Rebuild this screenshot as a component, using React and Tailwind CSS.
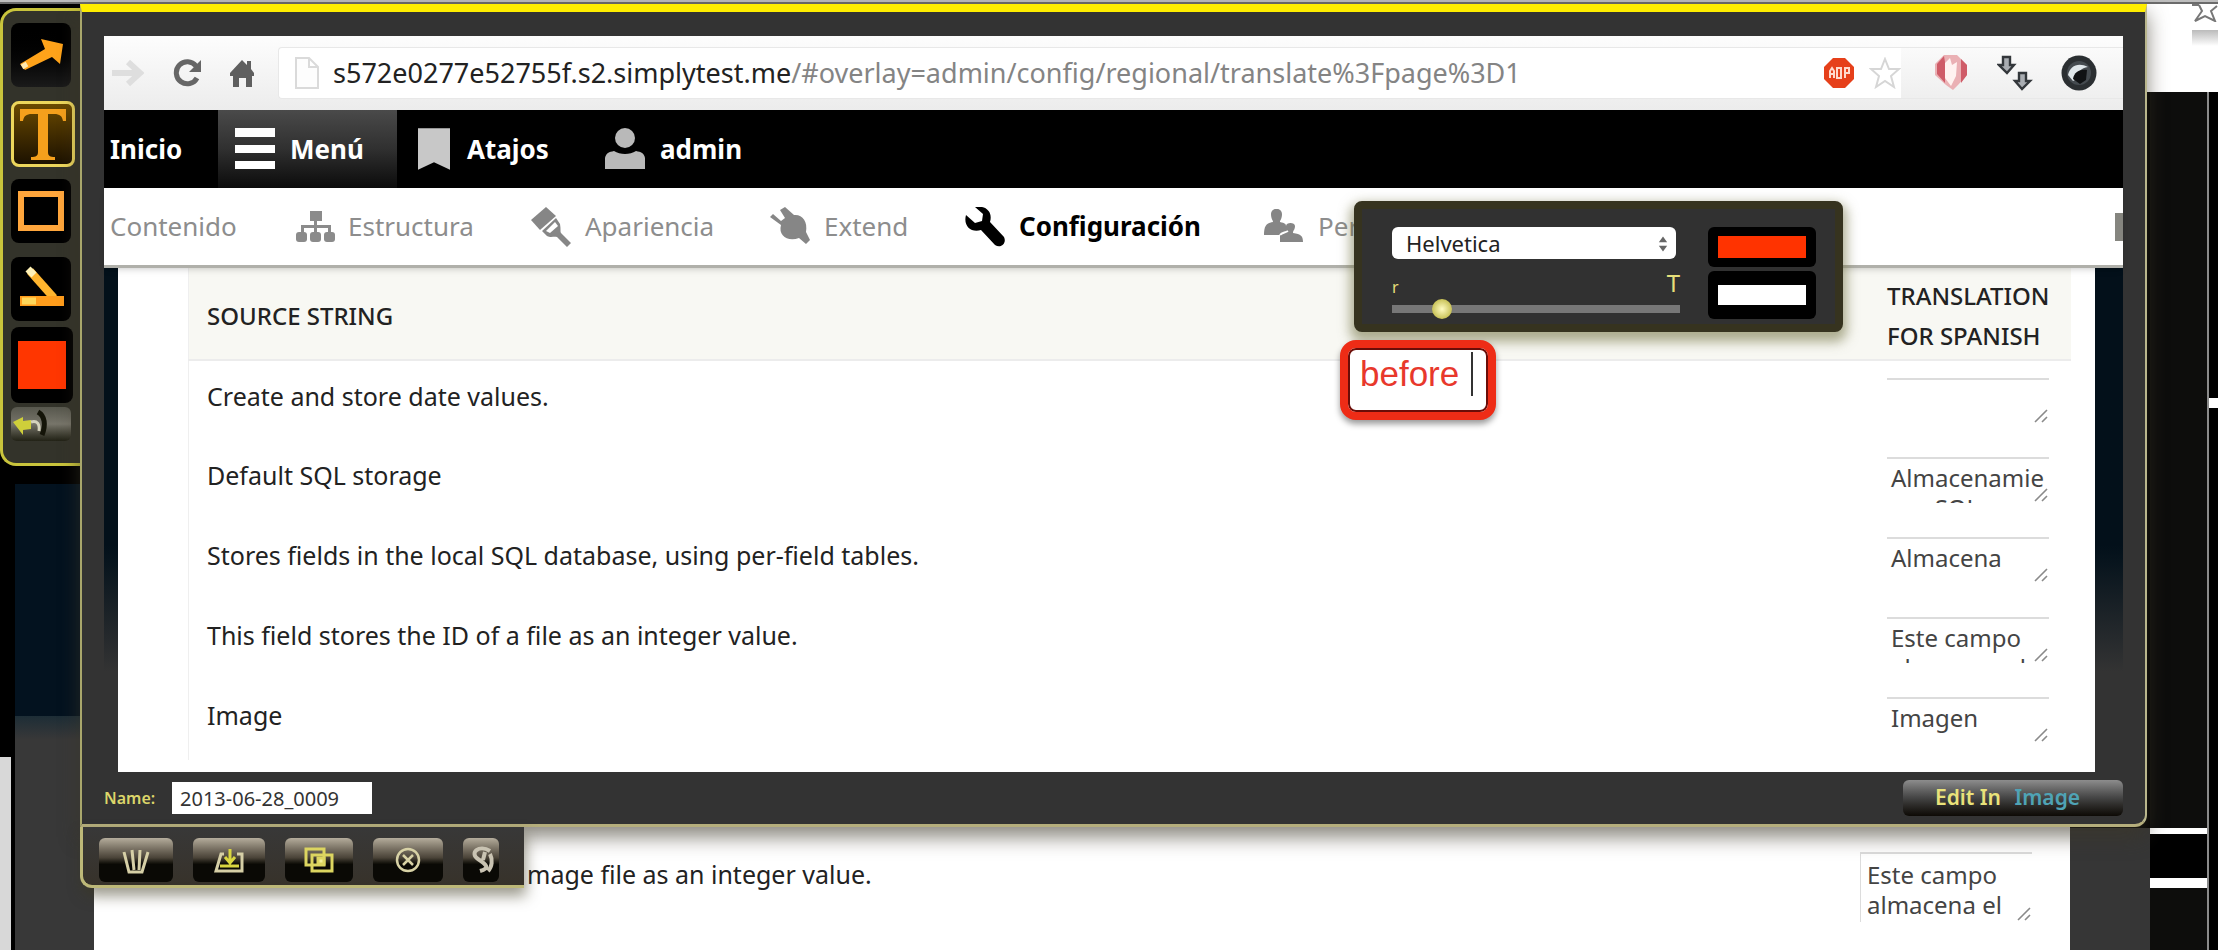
import React from "react";

const rows = [
  { source: "Create and store date values.", target: "" },
  { source: "Default SQL storage", target: "Almacenamie\n       SQL" },
  { source: "Stores fields in the local SQL database, using per-field tables.", target: "Almacena" },
  { source: "This field stores the ID of a file as an integer value.", target: "Este campo\nalmacena el" },
  { source: "Image", target: "Imagen" },
];

function Grip() {
  return (
    <svg className="pointer-events-none absolute right-0 bottom-0 h-4 w-4" viewBox="0 0 16 16" stroke="#8a8a8a" strokeWidth="1.6" fill="none">
      <path d="M2 14 14 2M9 14l5-5" />
    </svg>
  );
}

function Backdrop() {
  return (
    <div className="absolute inset-0 flex flex-col bg-black" aria-hidden="true">
      <div className="h-1 border-b-2 border-[#6b6b6b] bg-[#bdbdbd]" />
      <div className="flex h-[88px] justify-end">
        <div className="flex w-[71px] flex-col items-end bg-white">
          <svg className="h-[18px] w-[26px]" viewBox="0 0 26 18" fill="none" stroke="#777" strokeWidth="2">
            <path d="M0 1h7M7 1 10 7l-7 10 10-5 10 5-4-10 6-5" />
          </svg>
          <div className="mt-2 h-4 w-[26px] bg-linear-to-b from-[#bbb] to-white" />
        </div>
      </div>
      <div className="flex flex-1">
        <div className="flex w-[15px] flex-col">
          <div className="h-[665px]" />
          <div className="mr-1 flex-1 bg-[#d8d8d8]" />
        </div>
        <div className="flex w-[79px] flex-col">
          <div className="h-[392px]" />
          <div className="h-[232px] bg-[#03121f]" />
          <div className="flex-1 bg-linear-to-b from-[#1d2d36] to-[#383838] to-10%" />
        </div>
        <div className="flex-1 self-end bg-white">
          <div className="h-[130px]" />
        </div>
        <div className="flex w-20 flex-col">
          <div className="h-[736px]" />
          <div className="flex-1 bg-[#363636]" />
        </div>
        <div className="flex w-[57px] flex-col bg-[#0d0d0c]">
          <div className="h-[736px]" />
          <div className="h-1.5 bg-white" />
          <div className="h-11 bg-black" />
          <div className="h-2.5 bg-white" />
        </div>
        <div className="flex w-[11px] flex-col border-l-2 border-[#8a8a8a]">
          <div className="h-[306px]" />
          <div className="h-2.5 bg-white" />
        </div>
      </div>
    </div>
  );
}

function ToolBar() {
  return (
    <div className="mt-1 flex h-[458px] w-20 shrink-0 flex-col rounded-l-2xl border-3 border-r-0 border-[#c9c43c] bg-[#33332a] pt-3 pl-2">
      <button aria-label="Arrow" className="flex h-16 w-[60px] items-center justify-center rounded-lg bg-linear-to-b from-black to-[#1a1a1a]">
        <svg className="h-11 w-12" viewBox="0 0 48 44">
          <path d="M3 31 28 16l-4-10 22 5-3 20-8-7L8 37Z" fill="#ffa31a" />
          <path d="m5 34 5-3" stroke="#ffe9b0" strokeWidth="5" />
        </svg>
      </button>
      <button aria-label="Text" className="mt-3.5 flex h-[66px] w-16 items-center justify-center rounded-lg border-3 border-[#ecd65c] bg-linear-to-b from-[#6b4a00] to-[#1d1200]">
        <svg className="h-14 w-12" viewBox="0 0 48 56" fill="#f5a01c">
          <path d="M1 3h46v12h-3c-1-5-3-7-9-7h-6v38c0 4 2 5 7 5v3H12v-3c5 0 7-1 7-5V8h-6c-6 0-8 2-9 7H1Z" />
        </svg>
      </button>
      <button aria-label="Rectangle" className="mt-3 flex h-16 w-[60px] items-center justify-center rounded-lg bg-black">
        <span className="h-10 w-[46px] border-6 border-[#ffa63c]" />
      </button>
      <button aria-label="Pen" className="mt-3.5 flex h-16 w-[60px] items-center justify-center rounded-lg bg-black">
        <svg className="h-12 w-12" viewBox="0 0 48 48" fill="none">
          <path d="m13 6 24 27" stroke="#ffb52e" strokeWidth="8" />
          <path d="m11 4 6 6" stroke="#fff2b8" strokeWidth="7" />
          <path d="M3 36h44" stroke="#ff9d1c" strokeWidth="10" />
          <path d="M5 36h14" stroke="#ffd75a" strokeWidth="7" />
        </svg>
      </button>
      <button aria-label="Color" className="mt-1.5 flex h-[76px] w-[62px] items-center justify-center rounded-lg bg-black">
        <span className="size-12 bg-[#ff3600]" />
      </button>
      <button aria-label="Undo" className="mt-1 flex h-[34px] w-[60px] items-center rounded-md bg-linear-to-b from-[#57574d] via-[#77756a] to-[#222216]">
        <svg className="h-8 w-14" viewBox="0 0 56 32" fill="none">
          <path d="M31 27c4-10 3-19-4-23" stroke="#141408" strokeWidth="5" />
          <path d="m2 14 10-5v4l8-1v9l-8 1v5Z" fill="#cfcf3a" />
          <path d="M20 14c6-2 9 2 8 9" stroke="#d5d3bd" strokeWidth="3" />
        </svg>
      </button>
    </div>
  );
}

function BrowserBar() {
  return (
    <div className="flex h-[74px] items-center bg-linear-to-b from-[#fdfdfd] to-[#ececec] pl-2">
      <button aria-label="Forward" className="w-8">
        <svg className="h-7 w-8" viewBox="0 0 32 28" fill="none" stroke="#dedede" strokeWidth="6">
          <path d="M0 14h24M16 3l12 11-12 11" />
        </svg>
      </button>
      <button aria-label="Reload" className="ml-7">
        <svg className="h-7 w-[30px]" viewBox="0 0 30 28" fill="none">
          <path d="M24 7A11 11 0 1 0 25 19" stroke="#666" strokeWidth="5" />
          <path d="M29 1v12H17Z" fill="#666" />
        </svg>
      </button>
      <button aria-label="Home" className="ml-7">
        <svg className="h-7 w-6" viewBox="0 0 24 28" fill="#5f5f5f">
          <path d="m12 1 5 5V2h4v8l3 4v3h-2v11h-6v-9H9v9H3V17H0v-3Z" />
        </svg>
      </button>
      <div className="ml-6 flex h-[52px] flex-1 items-center rounded-l border-y border-l border-[#e8e8e8] bg-white pl-4">
        <svg className="h-8 w-6" viewBox="0 0 24 32" fill="#fdfdfd" stroke="#dadada" strokeWidth="2">
          <path d="M1 1h13l9 9v21H1ZM14 1v9h9" />
        </svg>
        <p className="ml-3.5 flex-1 text-[27px] leading-8 whitespace-nowrap text-[#848484]">
          <span className="text-[#222]">s572e0277e52755f.s2.simplytest.me</span>/#overlay=admin/config/regional/translate%3Fpage%3D1
        </p>
        <svg className="mr-3.5 size-8" viewBox="0 0 32 32">
          <path d="M10 1h12l9 9v12l-9 9H10l-9-9V10Z" fill="#e6401a" />
          <path d="M7 21v-7l2-3 2 3v7M7 17h4M14 11v10h4v-10ZM22 21V11h4v5h-4" stroke="#ffd9cc" strokeWidth="2" fill="none" />
        </svg>
        <svg className="size-8" viewBox="0 0 32 32" fill="#fff" stroke="#d6d6d6" strokeWidth="2">
          <path d="m16 2 4 10h10l-8 7 3 11-9-6-9 6 3-11-8-7h10Z" />
        </svg>
      </div>
      <div className="flex h-[52px] items-center gap-7 border-y border-[#e8e8e8] pr-[26px] pl-8">
        <svg className="h-10 w-9" viewBox="0 0 36 40">
          <path d="M11 2h13l10 10v10l-9 10-5 5-7-5L2 22V11Z" fill="#eab0b4" />
          <path d="M11 3 4 11v10l8 9V9ZM28 30l6-8V12l-6-6Z" fill="#cf5c68" />
          <path d="m12 10 5-5 2 7 5-3-1 14-5 10-6-8Z" fill="#fff2f0" />
        </svg>
        <svg className="h-9 w-9" viewBox="0 0 36 36" fill="#a9adb2" stroke="#33373b" strokeWidth="2.4">
          <path d="M6 2h7v8h4l-7 8-8-8h4ZM22 18h7v8h4l-8 8-7-8h4Z" />
        </svg>
        <svg className="size-9" viewBox="0 0 36 36">
          <circle cx="18" cy="18" r="17.5" fill="#2b2f32" />
          <circle cx="18" cy="18" r="12" fill="#454b50" />
          <path d="M7 20c2-9 10-13 20-8-7 1-10 4-11 12l-4 2Z" fill="#dfe6ea" />
          <path d="M12 24c1-7 7-10 14-9l-1 10-6 4Z" fill="#101214" />
        </svg>
      </div>
    </div>
  );
}

function AdminNav() {
  return (
    <nav className="flex h-[78px] items-center bg-black text-[26px] font-bold text-white">
      <a href="#inicio" className="w-[114px] pl-1.5">Inicio</a>
      <a href="#menu" className="flex h-full w-[179px] items-center bg-linear-to-b from-[#4a4a4a] via-[#303030] to-[#0c0c0c] pl-4">
        <svg className="h-[42px] w-[42px]" viewBox="0 0 42 42" fill="#fff">
          <path d="M1 0h40v9H1ZM1 17h40v8H1ZM1 33h40v8H1Z" />
        </svg>
        <span className="ml-3.5">Menú</span>
      </a>
      <a href="#atajos" className="flex w-[187px] items-center pl-[21px]">
        <svg className="h-11 w-8" viewBox="0 0 34 44" fill="#c8c8c8">
          <path d="M0 0h34v44L17 36 0 44Z" />
        </svg>
        <span className="ml-[17px]">Atajos</span>
      </a>
      <a href="#admin" className="flex items-center pl-5">
        <svg className="h-[42px] w-[42px]" viewBox="0 0 42 42" fill="#b9b9b9">
          <ellipse cx="21" cy="10" rx="10" ry="10" />
          <path d="M1 41V30c1-5 4-6 9-7 6 4 16 4 22 0 5 1 8 2 9 7v11Z" />
        </svg>
        <span className="ml-3.5">admin</span>
      </a>
    </nav>
  );
}

function SectionTabs() {
  return (
    <nav className="relative z-10 flex h-[80px] items-center overflow-hidden border-b-3 border-[#b0b0aa] bg-white text-[26px] whitespace-nowrap text-[#8d8d8d] shadow-md">
      <a href="#contenido" className="w-[192px] shrink-0 pl-1.5">Contenido</a>
      <a href="#estructura" className="flex w-[235px] shrink-0 items-center">
        <svg className="h-8 w-10" viewBox="0 0 40 32" fill="#8b8b8b">
          <path d="M14 0h12v10h-5v4h14v7h-3v-4H21v4h-3v-4H8v4H5v-7h13v-4h-4Z" />
          <rect x="0" y="21" width="11" height="10" rx="3" />
          <rect x="14" y="21" width="11" height="10" rx="3" />
          <rect x="28" y="21" width="11" height="10" rx="3" />
        </svg>
        <span className="ml-3">Estructura</span>
      </a>
      <a href="#apariencia" className="flex w-[239px] shrink-0 items-center">
        <svg className="h-10 w-10" viewBox="0 0 40 40" fill="#868686">
          <path d="M15 0 0 13l9 10L25 9Z" />
          <path d="m11 24 14-13 4 6c1 5 0 8 1 9l10 10-4 4-10-10c-3-1-6 1-10-1Z" />
          <path d="m15 24 9-9 3 4-8 7Z" fill="#fff" />
        </svg>
        <span className="ml-3.5">Apariencia</span>
      </a>
      <a href="#extend" className="flex w-[195px] shrink-0 items-center">
        <svg className="h-10 w-10" viewBox="0 0 40 40" fill="#868686">
          <path d="m0 10 3-3 8 7 4-3-5-8 5-3 9 8c8-1 14 6 12 17l4 8-4 4-7-6c-11 4-21-2-18-13Z" />
        </svg>
        <span className="ml-3.5">Extend</span>
      </a>
      <a href="#configuracion" className="flex w-[299px] shrink-0 items-center font-bold text-black">
        <svg className="h-10 w-10" viewBox="0 0 40 40" fill="#000">
          <path d="M10 0c11-2 18 5 15 15l14 15c3 6-3 12-9 8L16 23C6 26-2 19 1 8l9 8 7-2 1-7Z" />
        </svg>
        <span className="ml-3.5">Configuración</span>
      </a>
      <a href="#personas" className="flex shrink-0 items-center">
        <svg className="h-9 w-10" viewBox="0 0 40 36" fill="#868686">
          <path d="M7 5c0-7 11-7 11 0 0 5-2 6-2 8 5 1 6 2 6 4 0-4 9-4 9 0 0 4-2 4-2 7 8 1 10 3 10 9H16v-7H0c0-9 2-12 9-13 0-2-2-3-2-8Z" />
          <path d="M16 26c2-3 5-2 8-4" stroke="#fff" strokeWidth="2" fill="none" />
        </svg>
        <span className="ml-3.5">Personas</span>
      </a>
      <span className="ml-auto h-7 w-2 shrink-0 bg-[#85857f]" />
    </nav>
  );
}

function StringsTable() {
  return (
    <div className="flex h-[504px] bg-linear-to-b from-[#03101a] from-55% to-[#333333] to-80% pr-7 pl-3.5">
      <div className="flex-1 overflow-hidden bg-white pr-6 pl-[70px]">
        <table className="w-full table-fixed border-collapse border-l border-[#efefef] text-[25px] text-[#222]">
          <thead>
            <tr className="h-[92px] border-b-2 border-[#ececec] bg-[#f8f8f3] text-left text-2xl">
              <th className="pt-1 pl-[18px] font-medium">SOURCE STRING</th>
              <th className="w-[188px] pt-1 pl-1 leading-10 font-medium">TRANSLATION FOR SPANISH</th>
            </tr>
          </thead>
          <tbody>
            {rows.map((r) => (
              <tr key={r.source} className="h-20">
                <td className="pb-2 pl-[18px]">{r.source}</td>
                <td className="pl-1 align-middle">
                  <div className="relative h-[46px] w-[162px]">
                    <textarea
                      aria-label={"Translation of: " + r.source}
                      defaultValue={r.target}
                      className="block h-[46px] w-full resize-none overflow-hidden border-t-2 border-[#dcdcdc] pt-1 pl-1 text-2xl leading-[30px] whitespace-pre text-[#444]"
                    />
                    <Grip />
                  </div>
                </td>
              </tr>
            ))}
          </tbody>
        </table>
      </div>
    </div>
  );
}

function TextOptions() {
  return (
    <div className="absolute top-[201px] left-[1354px] z-20 flex h-[131px] w-[489px] rounded-lg border-8 border-[#36331f] bg-[#313131] pt-[18px] pl-[30px] shadow-[0_6px_12px_4px_rgba(110,110,60,0.55)]">
      <div className="w-[288px]">
        <div className="relative">
          <select aria-label="Font" className="h-8 w-[284px] appearance-none rounded-md bg-white pl-3.5 text-[22px] leading-8 text-[#222]">
            <option>Helvetica</option>
          </select>
          <svg className="pointer-events-none absolute top-2 right-3 h-[18px] w-2.5" viewBox="0 0 12 18" fill="#666">
            <path d="m6 0 5 7H1ZM6 18l5-7H1Z" />
          </svg>
        </div>
        <div className="mt-4 flex h-6 items-end justify-between leading-6 text-[#e6df7a]">
          <span className="text-base">r</span>
          <span className="text-2xl">T</span>
        </div>
        <input
          type="range"
          aria-label="Text size"
          defaultValue="15"
          className="block h-5 w-full appearance-none bg-transparent [&::-webkit-slider-runnable-track]:h-2 [&::-webkit-slider-runnable-track]:bg-[#777] [&::-webkit-slider-thumb]:-mt-1.5 [&::-webkit-slider-thumb]:size-5 [&::-webkit-slider-thumb]:appearance-none [&::-webkit-slider-thumb]:rounded-full [&::-webkit-slider-thumb]:bg-radial [&::-webkit-slider-thumb]:from-[#fffbc0] [&::-webkit-slider-thumb]:to-[#b3aa00]"
        />
      </div>
      <div className="ml-7 flex w-[108px] shrink-0 flex-col gap-1">
        <button aria-label="Text color" className="flex h-10 items-center justify-center rounded-md bg-black">
          <span className="h-[22px] w-[88px] bg-[#ff3300]" />
        </button>
        <button aria-label="Outline color" className="flex h-12 items-center justify-center rounded-md bg-black">
          <span className="h-5 w-[88px] bg-white" />
        </button>
      </div>
    </div>
  );
}

function Note() {
  return (
    <div className="absolute top-[340px] left-[1340px] z-20 flex h-20 w-[156px] rounded-2xl border-8 border-[#ee2c16] bg-white pt-1 pl-3 font-['Liberation_Sans',sans-serif] text-[35px] leading-[44px] text-[#e8382c] shadow-[0_4px_6px_rgba(0,0,0,0.4),inset_0_0_0_2px_#6b0d08]">
      before
      <span className="ml-3 h-11 w-0.5 shrink-0 bg-[#333]" />
    </div>
  );
}

const gloss = "flex h-11 items-center justify-center rounded-md bg-linear-to-b from-[#b5ad9c] via-[#4a4338] via-45% to-[#0a0905] to-60%";

function BottomButtons() {
  return (
    <div className="flex h-[61px] w-[444px] items-center gap-5 rounded-bl-xl border-b-3 border-l-3 border-[#bdb878] bg-linear-to-b from-[#383838] to-[#37322a] pt-2 pl-4 shadow-[2px_8px_14px_rgba(60,55,30,0.5)]">
      <button aria-label="Delete" className={gloss + " w-[74px]"}>
        <svg className="h-7 w-8" viewBox="0 0 32 28" fill="none" stroke="#d6cfa6" strokeWidth="3">
          <path d="m4 6 5 20h13l6-20M12 4l2 20M20 4l-1 20" />
        </svg>
      </button>
      <button aria-label="Save" className={gloss + " w-[72px]"}>
        <svg className="h-7 w-8" viewBox="0 0 32 28" fill="none">
          <path d="M11 8H8L3 25h26V8h-5" stroke="#d6cfa6" strokeWidth="3" />
          <path d="M17 3v12M12 11l5 6 5-6M7 20h19" stroke="#d9d640" strokeWidth="3" />
        </svg>
      </button>
      <button aria-label="Copy" className={gloss + " w-[68px]"}>
        <svg className="h-7 w-8" viewBox="0 0 32 28" fill="none" stroke="#dcd560" strokeWidth="3">
          <path d="M9 9h20v16H9ZM3 3h18v16H3Z" />
          <path d="M15 12h6v6h-6Z" fill="#f4ef9a" />
        </svg>
      </button>
      <button aria-label="Close" className={gloss + " w-[70px]"}>
        <svg className="size-7" viewBox="0 0 28 28" fill="none" stroke="#d8d2a6" strokeWidth="2.5">
          <circle cx="14" cy="14" r="11" />
          <path d="m9 9 10 10M19 9 9 19" />
        </svg>
      </button>
      <button aria-label="Share" className={gloss + " w-9"}>
        <svg className="h-8 w-8" viewBox="0 0 32 32" fill="none" stroke="#c9c3b2" strokeWidth="4">
          <path d="M25 7C14 0 4 9 13 15s12 9 2 12M25 10c3 6 2 13-2 17M20 8l-2 8" />
        </svg>
      </button>
    </div>
  );
}

export default function App() {
  return (
    <div className="relative min-h-screen overflow-hidden bg-black font-['Noto_Sans','Open_Sans',sans-serif]">
      <Backdrop />
      <div className="relative z-10 flex pt-1">
        <ToolBar />
        <div className="mr-[71px] min-w-0 flex-1">
          <div className="rounded-br-xl border-t-8 border-r-2 border-b-3 border-l-2 border-t-[#ffee00] border-r-[#b9b68c] border-b-[#b5ae7c] border-l-[#a9a76c] bg-[#333333] px-[22px] pt-6 shadow-[0_10px_20px_rgba(60,55,40,0.6)]">
            <BrowserBar />
            <AdminNav />
            <SectionTabs />
            <StringsTable />
            <div className="flex h-[52px] items-center">
              <label htmlFor="shot-name" className="w-[68px] text-base font-semibold text-[#dcd66a]">Name:</label>
              <input id="shot-name" defaultValue="2013-06-28_0009" className="h-8 w-[200px] bg-white pl-2 text-xl text-[#333]" />
              <button className="ml-auto h-9 w-[220px] rounded-md bg-linear-to-b from-[#8d8d8d] via-[#444] to-[#0d0a06] text-left text-[21px] font-semibold text-[#e9e27a]">
                <span className="ml-8">Edit In</span> <span className="ml-2 text-[#4fa3b5]">Image</span>
              </button>
            </div>
          </div>
          <BottomButtons />
        </div>
      </div>
      <div className="relative mr-[186px] -mt-9 ml-[527px] flex items-start justify-between text-[25px] text-[#222]">
        <p className="pt-1">mage file as an integer value.</p>
        <div className="relative w-[172px]">
          <textarea
            aria-label="Translation of the image file string"
            defaultValue={"Este campo almacena el"}
            className="block h-[70px] w-full resize-none overflow-hidden border-t-2 border-l border-[#dcdcdc] pt-1.5 pl-1.5 text-2xl leading-[30px] text-[#444]"
          />
          <Grip />
        </div>
      </div>
      <TextOptions />
      <Note />
    </div>
  );
}
